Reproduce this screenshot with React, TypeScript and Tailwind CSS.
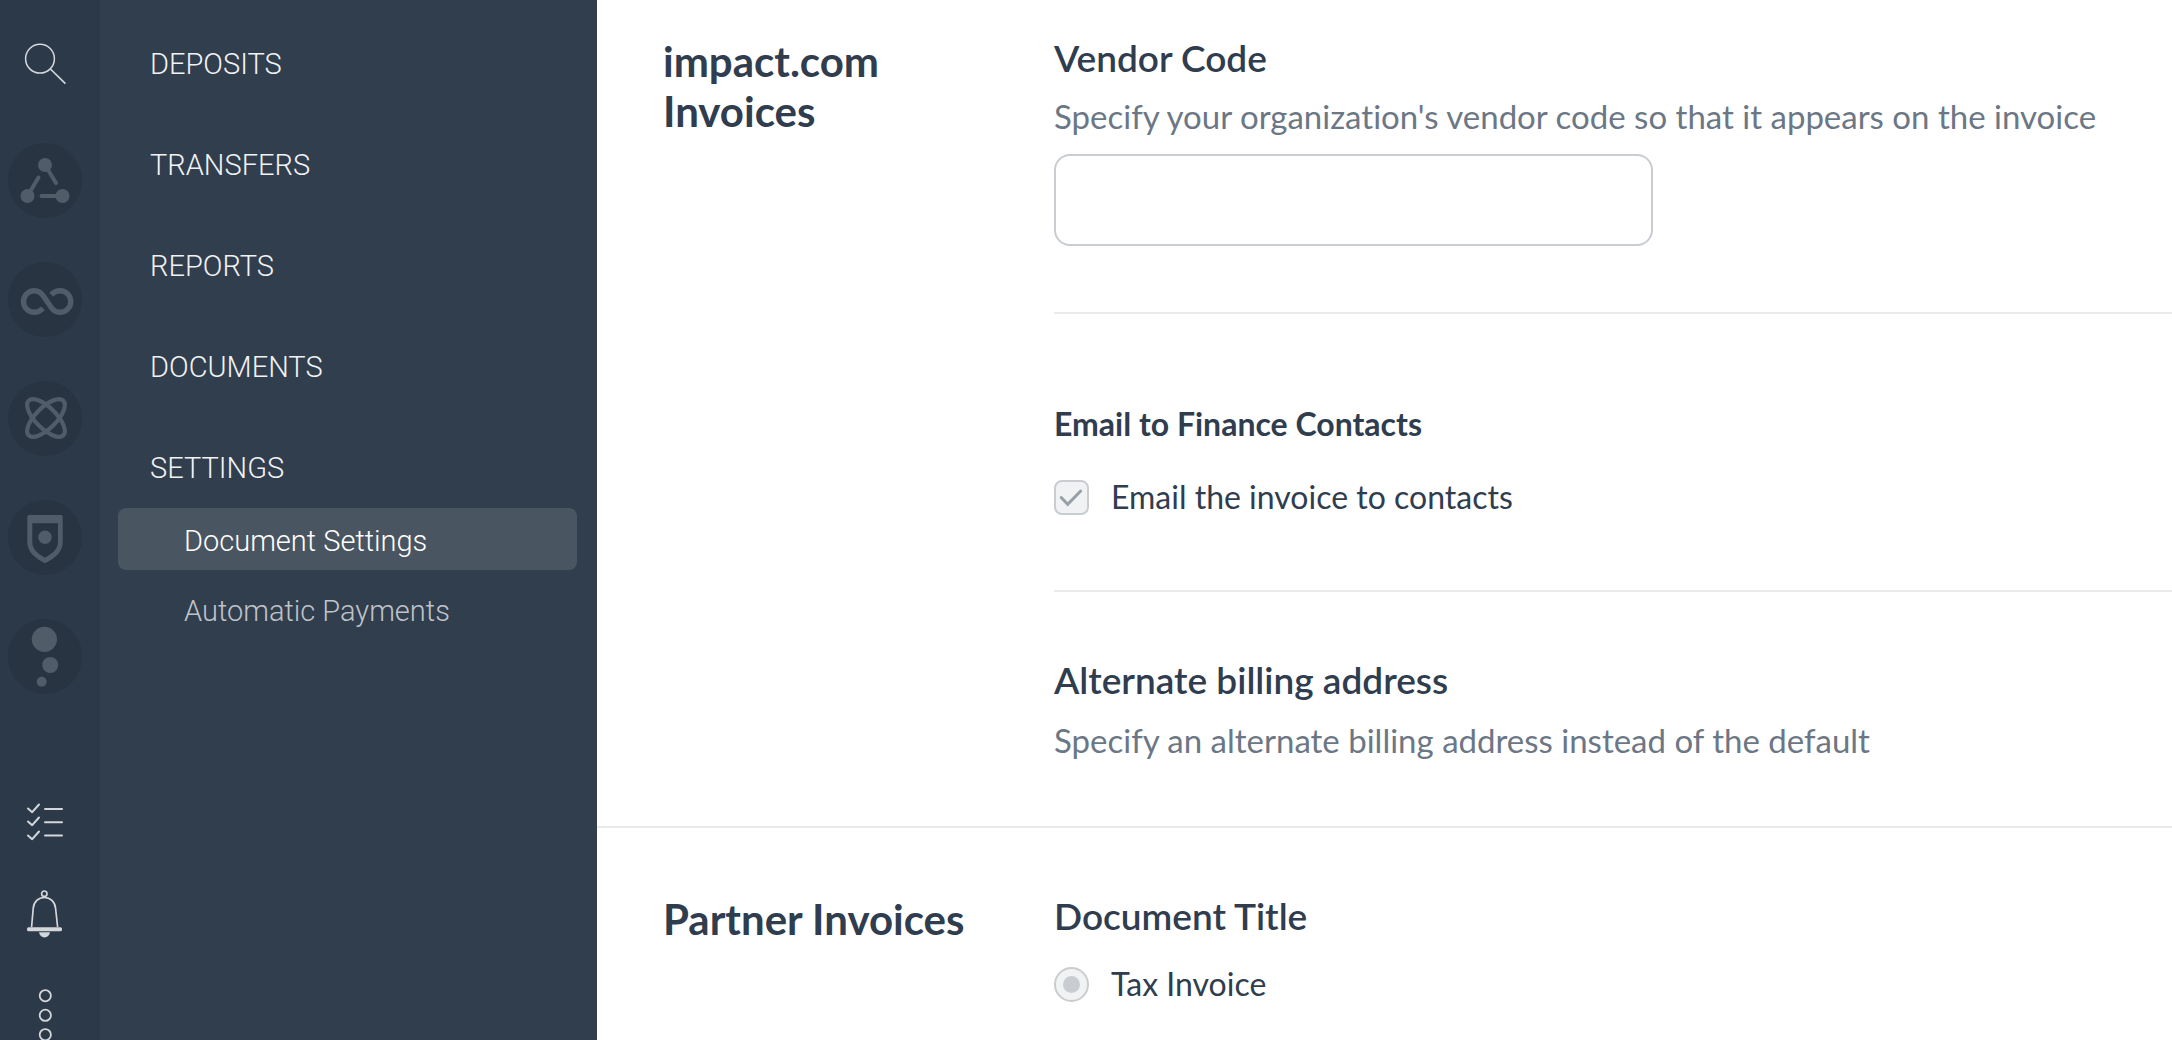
import type { ReactNode } from "react";

const sections = ["DEPOSITS", "TRANSFERS", "REPORTS", "DOCUMENTS", "SETTINGS"];

const RailButton = ({
  label,
  children,
}: {
  label: string;
  children: ReactNode;
}) => (
  <button
    type="button"
    aria-label={label}
    className="flex h-[75px] w-[74px] rounded-full bg-[#283441] text-[#505c67]"
  >
    <svg width="74" height="75" viewBox="0 0 74 75" fill="none">
      {children}
    </svg>
  </button>
);

const Rail = () => (
  <div className="flex w-[100px] shrink-0 flex-col bg-[#2c3948] pt-10 pl-2 text-[#d3d6da]">
    <button type="button" aria-label="Search" className="w-[74px]">
      <svg width="74" height="48" viewBox="0 0 74 48" fill="none">
        <circle cx="32" cy="18.7" r="14.4" stroke="currentColor" strokeWidth="1.5" />
        <path d="M42.4 29 57.4 43.6" stroke="currentColor" strokeWidth="1.7" />
      </svg>
    </button>
    <div className="mt-[55px] flex flex-col gap-11">
      <RailButton label="Partnerships">
        <g fill="currentColor">
          <circle cx="37" cy="22" r="7" />
          <circle cx="19.5" cy="53" r="7" />
          <circle cx="54.5" cy="53" r="7" />
        </g>
        <path
          d="M37 22 48 40M19.5 53l11-18.5M54.5 53h-21"
          stroke="currentColor"
          strokeWidth="4"
          strokeLinecap="round"
        />
      </RailButton>
      <RailButton label="Creators">
        <path
          d="M35 46.2C32.5 49 29.5 50.3 26.3 50.3A10.8 10.8 0 0 1 26.3 28.7C30 28.7 33 30.5 35 33.5L43.3 45.5C45.3 48.5 48.3 50.3 52 50.3A10.8 10.8 0 0 0 52 28.7C48.8 28.7 45.8 30 43.3 32.8"
          stroke="currentColor"
          strokeWidth="5.4"
        />
      </RailButton>
      <RailButton label="Optimize">
        <g stroke="currentColor" strokeWidth="4.2">
          <ellipse cx="38" cy="37" rx="24.5" ry="10.4" transform="rotate(45 38 37)" />
          <ellipse cx="38" cy="37" rx="24.5" ry="10.4" transform="rotate(-45 38 37)" />
        </g>
      </RailButton>
      <RailButton label="Protect">
        <path
          fill="currentColor"
          fillRule="evenodd"
          d="M20.5 15h33l1.2 1.2V42c0 10-7.5 16-17.7 21.3C26.8 58 19.3 52 19.3 42V16.2zM24.3 23.3V42c0 7 5.2 11.5 12.7 15.7C44.5 53.5 50 49 50 42V23.3z"
        />
        <circle cx="37" cy="37.3" r="6.7" fill="currentColor" />
      </RailButton>
      <RailButton label="Advocate">
        <g fill="currentColor">
          <circle cx="36.4" cy="20.3" r="12.6" />
          <circle cx="42.2" cy="46" r="8" />
          <circle cx="33.7" cy="62.7" r="5" />
        </g>
      </RailButton>
    </div>
    <div className="mt-[108px] flex w-[74px] flex-col gap-[46px]">
      <button type="button" aria-label="Tasks">
        <svg width="74" height="40" viewBox="0 0 74 40" fill="none">
          <path
            d="M20 6.5l4.2 3.7L31 2.5M20 19.5l4.2 3.7L31 15.5M20 33.5l4.2 3.7L31 29.5M37 7h17M37 20.3h17M37 33.4h17"
            stroke="currentColor"
            strokeWidth="2"
            strokeLinecap="round"
            strokeLinejoin="round"
          />
        </svg>
      </button>
      <button type="button" aria-label="Notifications">
        <svg width="74" height="52" viewBox="0 0 74 52" fill="none">
          <g stroke="currentColor" strokeWidth="1.7">
            <circle cx="36.3" cy="5.7" r="2.7" />
            <path d="M23.6 39 25.2 20.5C25.8 13.5 30.5 9.5 36.3 9.5S47 13.5 47.6 20.5L49.6 39" />
          </g>
          <rect x="19" y="39.2" width="35" height="4" rx="1.5" fill="currentColor" />
          <path d="M31 44.2h11c-.5 3.3-2.8 5.2-5.5 5.2S31.5 47.5 31 44.2z" fill="currentColor" />
        </svg>
      </button>
      <button type="button" aria-label="More">
        <svg width="74" height="58" viewBox="0 0 74 58" fill="none">
          <g stroke="currentColor" strokeWidth="1.8">
            <circle cx="37.3" cy="9.7" r="5.6" />
            <circle cx="37.3" cy="29.3" r="5.6" />
            <circle cx="37.3" cy="48.7" r="5.6" />
          </g>
        </svg>
      </button>
    </div>
  </div>
);

const Sidebar = () => (
  <nav className="w-[497px] shrink-0 bg-[#313e4d] pt-11 font-['Roboto',sans-serif] text-[29px] leading-[41px] font-light text-[#f1f2f4]">
    <ul className="flex flex-col gap-[60px] pl-[50px]">
      {sections.map((name) => (
        <li key={name}>
          <a href="#">{name}</a>
        </li>
      ))}
    </ul>
    <ul className="mt-[19px] mr-5 ml-[18px] flex flex-col gap-2">
      <li>
        <a
          href="#"
          className="flex h-[62px] items-center rounded-lg bg-[#4a5562] pt-1 pl-[66px] text-white"
        >
          Document Settings
        </a>
      </li>
      <li>
        <a
          href="#"
          className="flex h-[62px] items-center rounded-lg pt-1 pl-[66px] text-[#bfc3c8]"
        >
          Automatic Payments
        </a>
      </li>
    </ul>
  </nav>
);

const App = () => {
  return (
    <div className="flex h-screen overflow-hidden bg-white font-['Lato',sans-serif] text-[#2f3d4f] [font-variant-ligatures:none]">
      <Rail />
      <Sidebar />
      <main className="min-w-0 flex-1 overflow-hidden">
        <section className="grid grid-cols-[391px_1fr] border-b-2 border-[#e9eaeb] pt-[34px] pb-[62px] pl-[66px]">
          <h2 className="pt-0.5 text-[42px] leading-[50px] font-bold">
            impact.com
            <br />
            Invoices
          </h2>
          <div>
            <div className="border-b-2 border-[#e9eaeb] pb-[66px]">
              <h3 className="text-[37px] leading-[48px] font-semibold">
                <label htmlFor="vendor-code">Vendor Code</label>
              </h3>
              <p className="mt-2.5 text-[33px] leading-[48px] text-[#6c7785]">
                Specify your organization's vendor code so that it appears on
                the invoice
              </p>
              <input
                id="vendor-code"
                type="text"
                className="mt-3.5 block h-[92px] w-[599px] rounded-2xl border-2 border-[#c9cdd2] px-6 text-[32px]"
              />
            </div>
            <div className="border-b-2 border-[#e9eaeb] pt-[86px] pb-[69px]">
              <h3 className="text-[32px] leading-[48px] font-bold">
                Email to Finance Contacts
              </h3>
              <label className="mt-[25px] flex items-center text-[32px] leading-[48px]">
                <span className="relative mr-[22px] flex">
                  <input
                    type="checkbox"
                    defaultChecked
                    disabled
                    className="size-[35px] appearance-none rounded-lg border-2 border-[#c9cdd2] bg-[#f1f2f4]"
                  />
                  <svg
                    className="absolute inset-0"
                    width="35"
                    height="35"
                    viewBox="0 0 35 35"
                    fill="none"
                  >
                    <path
                      d="M7.2 17.5 13.7 24.3 26.7 11"
                      stroke="#979fa8"
                      strokeWidth="3"
                      strokeLinecap="round"
                    />
                  </svg>
                </span>
                Email the invoice to contacts
              </label>
            </div>
            <div className="pt-16">
              <h3 className="text-[37px] leading-[48px] font-semibold">
                Alternate billing address
              </h3>
              <p className="mt-3 text-[33px] leading-[48px] text-[#6c7785]">
                Specify an alternate billing address instead of the default
              </p>
            </div>
          </div>
        </section>
        <section className="grid grid-cols-[391px_1fr] pt-16 pl-[66px]">
          <h2 className="pt-0.5 text-[42px] leading-[50px] font-bold">
            Partner Invoices
          </h2>
          <div>
            <h3 className="text-[37px] leading-[48px] font-semibold">
              Document Title
            </h3>
            <label className="mt-5 flex items-center text-[32px] leading-[48px]">
              <span className="relative mr-[22px] flex">
                <input
                  type="radio"
                  name="document-title"
                  defaultChecked
                  disabled
                  className="size-[35px] appearance-none rounded-full border-2 border-[#c9cdd2] bg-[#f1f2f4]"
                />
                <span className="absolute inset-[9px] rounded-full bg-[#c9cdd2]" />
              </span>
              Tax Invoice
            </label>
          </div>
        </section>
      </main>
    </div>
  );
};

export default App;
